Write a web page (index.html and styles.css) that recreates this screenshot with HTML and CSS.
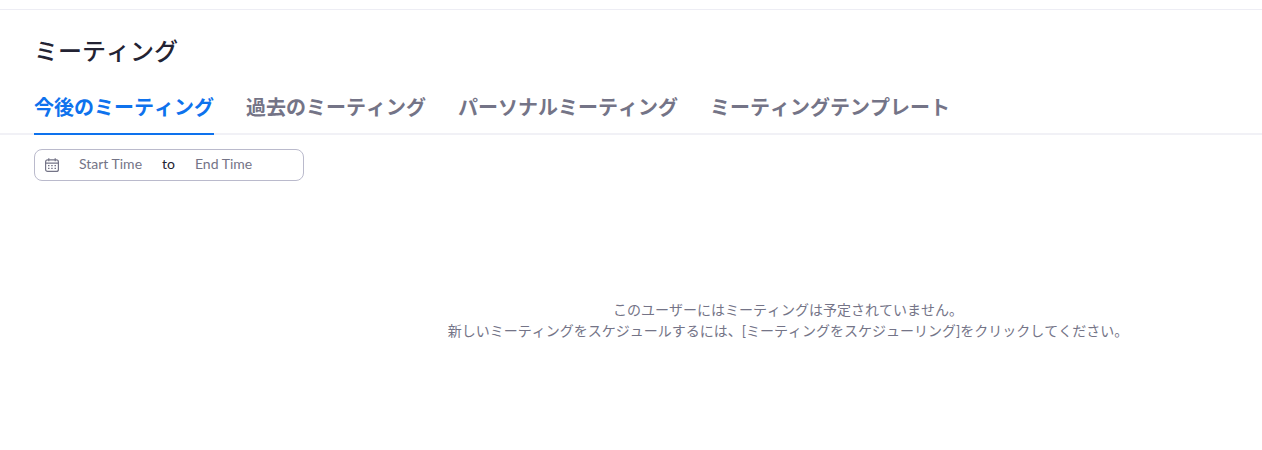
FILE: index.html
```html
<!DOCTYPE html>
<html lang="ja">
<head>
    <meta charset="UTF-8">
    <meta name="viewport" content="width=device-width, initial-scale=1.0">
    <title>ミーティング</title>
    <link rel="stylesheet" href="styles.css">
</head>
<body>
    <div class="page">
        <h1 class="page-title">ミーティング</h1>
        <div class="tabs">
            <a class="tab active">今後のミーティング</a>
            <a class="tab">過去のミーティング</a>
            <a class="tab">パーソナルミーティング</a>
            <a class="tab">ミーティングテンプレート</a>
        </div>
        <div class="date-range">
            <svg class="date-icon" width="16" height="16" viewBox="0 0 16 16" fill="none" stroke="#747487" stroke-width="1.2">
                <rect x="1.6" y="2.9" width="12.8" height="11.5" rx="2"/>
                <path d="M1.6 6.1h12.8M4.8 1.2v3M11.2 1.2v3"/>
                <path d="M4 8.6h1.5M7.2 8.6h1.5M10.5 8.6H12M4 11.4h1.5M7.2 11.4h1.5M10.5 11.4H12" stroke-width="1.4"/>
            </svg>
            <span class="date-text start">Start Time</span>
            <span class="date-sep">to</span>
            <span class="date-text">End Time</span>
        </div>
        <div class="empty">
            <p>このユーザーにはミーティングは予定されていません。</p>
            <p>新しいミーティングをスケジュールするには、[ミーティングをスケジューリング]をクリックしてください。</p>
        </div>
    </div>
</body>
</html>
```

FILE: styles.css
```css
body {
    margin: 0;
    padding: 0;
    background-color: #fff;
    font-family: "Lato", "Noto Sans CJK JP", sans-serif;
    overflow: hidden;
}

.page {
    margin-top: 9px;
    border-top: 1px solid #ededf4;
    height: 440px;
}

.page-title {
    margin: 0;
    padding: 24px 0 0 34px;
    font-size: 24px;
    line-height: 34px;
    font-weight: 500;
    font-kerning: none;
    color: #232333;
}

.tabs {
    display: flex;
    gap: 32px;
    margin-top: 15px;
    padding-left: 34px;
    border-bottom: 2px solid #f1f1f6;
    height: 50px;
    font-kerning: none;
}

.tab {
    font-size: 20px;
    line-height: 48px;
    height: 50px;
    font-weight: 700;
    color: #747487;
}

.tab.active {
    color: #0e72ed;
    border-bottom: 2px solid #0e72ed;
    height: 50px;
}

.date-range {
    display: flex;
    align-items: center;
    width: 268px;
    height: 30px;
    margin: 14px 0 0 34px;
    border: 1px solid #babacc;
    border-radius: 8px;
    font-size: 14px;
}

.date-icon {
    margin: 0 0 1px 9px;
}

.date-text {
    color: #747487;
    margin: 0 0 4px 20px;
}

.date-text.start {
    margin-left: 19px;
}

.date-sep {
    color: #232333;
    margin: 0 0 4px 20px;
}

.empty {
    margin-top: 118px;
    padding-left: 314px;
    text-align: center;
    font-size: 14px;
    line-height: 21px;
    font-kerning: none;
    color: #747487;
}

.empty p {
    margin: 0;
}
```
